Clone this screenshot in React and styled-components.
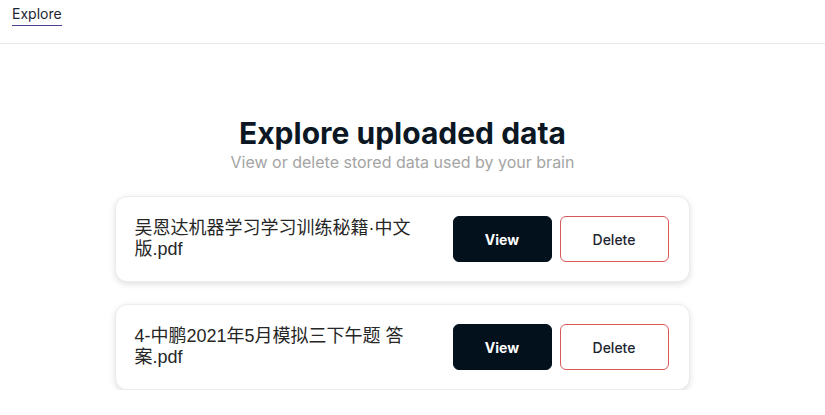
import styled, { createGlobalStyle } from "styled-components";

const GlobalStyle = createGlobalStyle`
  body {
    margin: 0;
    background: #ffffff;
    font-family: Inter, "Noto Sans", sans-serif;
  }
`;

const Header = styled.header`
  height: 43px;
  border-bottom: 1px solid #e8e8e8;
  padding: 0 12px;
  display: flex;
  align-items: flex-start;
`;

const Tab = styled.a`
  margin-top: 5px;
  font-size: 14px;
  line-height: 18px;
  color: #1d2433;
  padding-bottom: 2px;
  border-bottom: 1px solid #4b3f8f;
  text-decoration: none;
`;

const Main = styled.main`
  display: flex;
  flex-direction: column;
  align-items: center;
  padding: 71px 20px 0 0;
`;

const Title = styled.h1`
  margin: 0;
  font-size: 30px;
  line-height: 36px;
  font-weight: 700;
  color: #0b1824;
`;

const Subtitle = styled.p`
  margin: 1px 0 24px;
  font-size: 16px;
  line-height: 20px;
  color: #a4a4a4;
`;

const List = styled.div`
  display: flex;
  flex-direction: column;
  gap: 22px;
  width: 575px;
  margin-left: -1px;
`;

const Card = styled.div`
  display: flex;
  align-items: center;
  gap: 32px;
  padding: 20px 20px 20px 19px;
  border: 1px solid #ececec;
  border-radius: 12px;
  box-shadow: 0 2px 6px rgba(0, 0, 0, 0.13);
  background: #fff;
  box-sizing: border-box;
  height: 86px;
`;

const FileName = styled.p`
  flex: 1;
  margin: 0;
  font-family: "Liberation Sans", "Noto Sans CJK SC", sans-serif;
  font-size: 18px;
  line-height: 21px;
  color: #262626;
`;

const Actions = styled.div`
  display: flex;
  gap: 8px;
`;

const Button = styled.button`
  height: 46px;
  width: ${(p) => (p.$danger ? "109px" : "99px")};
  border-radius: 6px;
  font-family: Inter, sans-serif;
  font-size: 14px;
  cursor: pointer;
  font-weight: ${(p) => (p.$danger ? 500 : 700)};
  color: ${(p) => (p.$danger ? "#1c2430" : "#ffffff")};
  background: ${(p) => (p.$danger ? "#ffffff" : "#03111d")};
  border: 1px solid ${(p) => (p.$danger ? "#d9585a" : "#03111d")};
`;

const files = [
  "吴恩达机器学习学习训练秘籍·中文版.pdf",
  "4-中鹏2021年5月模拟三下午题 答案.pdf",
];

export default function App() {
  return (
    <>
      <GlobalStyle />
      <Header>
        <Tab>Explore</Tab>
      </Header>
      <Main>
        <Title>Explore uploaded data</Title>
        <Subtitle>View or delete stored data used by your brain</Subtitle>
        <List>
          {files.map((f) => (
            <Card key={f}>
              <FileName>{f}</FileName>
              <Actions>
                <Button>View</Button>
                <Button $danger>Delete</Button>
              </Actions>
            </Card>
          ))}
        </List>
      </Main>
    </>
  );
}
